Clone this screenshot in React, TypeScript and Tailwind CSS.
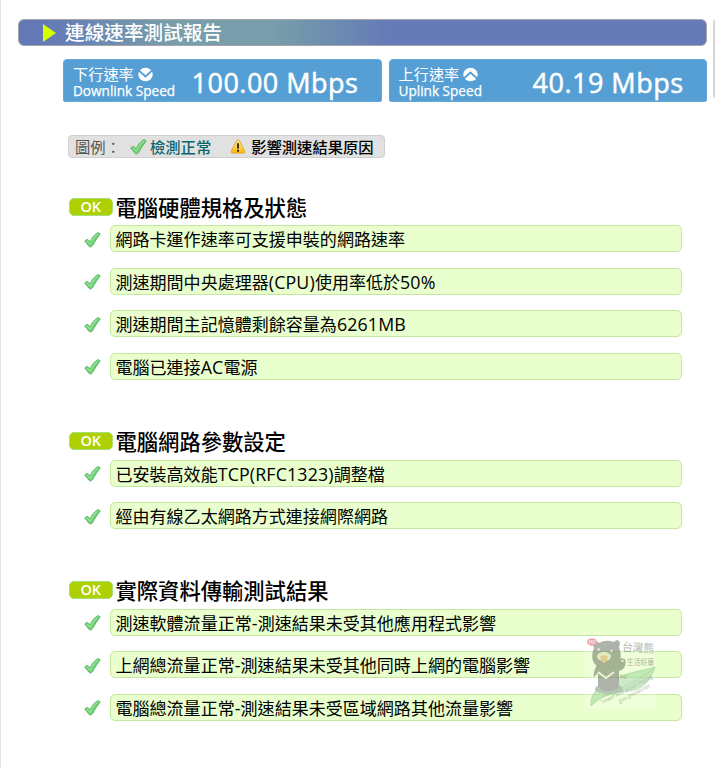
import React from 'react';

const CJK = "font-['Open_Sans','Noto_Sans_CJK_TC',sans-serif]";

function Check({ className }: { className: string }) {
  return (
    <svg viewBox="0 0 17 16" className={className}>
      <path
        d="M0.8 9.2 C1.8 7.4 3.4 7 4.6 8.2 L6 10 C7.8 6 10.4 2.6 13.4 0.9 C14.8 0.4 16.1 1.2 15.9 2.5 C13.2 5.6 11 9.4 8.6 13.6 C7.6 15.3 5.6 15.4 4.6 13.9 C3.5 12.1 2.2 10.6 0.8 9.2 Z"
        fill="#74cf79"
        stroke="#4fb556"
        strokeWidth="0.9"
      />
      <path d="M2.8 8.9 L6.2 12 C8.2 8 10.8 4.4 13.8 2.1" fill="none" stroke="#98e29a" strokeWidth="1.2" />
    </svg>
  );
}

function Arrow({ up = false }: { up?: boolean }) {
  return (
    <svg viewBox="0 0 15 15" className={up ? 'h-[15px] w-[15px] rotate-180' : 'h-[15px] w-[15px]'}>
      <ellipse cx="7.5" cy="7.5" rx="7.2" ry="6.8" fill="#fff" />
      <path d="M0.5 3.2 L7.5 9.4 L14.5 3.2" fill="none" stroke="#559fd5" strokeWidth="1.9" />
    </svg>
  );
}

function SpeedCard({ zh, en, value, up = false, valueClass }: {
  zh: string; en: string; value: string; up?: boolean; valueClass: string;
}) {
  return (
    <div className="flex h-[43px] w-[318.5px] shrink-0 rounded-t-[4px] rounded-b-[2px] border border-[#65a9d8] bg-[#559fd5] pl-[9px] text-white">
      <div className="w-[110px] shrink-0 pt-[5.5px]">
        <div className="flex h-[17px] items-center gap-[4px]">
          <span className="whitespace-nowrap text-[15.2px] leading-[17px]">{zh}</span>
          <Arrow up={up} />
        </div>
        <div className="whitespace-nowrap text-[13.6px] leading-[15px] [-webkit-text-stroke:0.25px_white]">{en}</div>
      </div>
      <div className={`whitespace-nowrap text-[27px] font-medium leading-[45px] tracking-[0.5px] [-webkit-text-stroke:0.5px_white] ${valueClass}`}>
        {value}
      </div>
    </div>
  );
}

/** Latin letters, digits and punctuation are set slightly larger than the Chinese around them. */
function RowText({ text }: { text: string }) {
  return (
    <span>
      {text.split(/([\x20-\x7e]+)/).map((part, i) =>
        i % 2 ? <span key={i} className="text-[17.8px] tracking-[0.15px]">{part}</span> : part,
      )}
    </span>
  );
}

function Section({ title, rows, className }: { title: string; rows: string[]; className: string }) {
  return (
    <section className={className}>
      <div className="flex h-[29.5px] items-start">
        <div className="mt-[2px] flex h-[18px] w-[43.5px] shrink-0 items-center justify-center rounded-[5px] border border-[#a5df79] bg-[#aed000] pt-[1px] text-[14.5px] font-semibold leading-none text-white">
          OK
        </div>
        <h2 className="ml-[3px] whitespace-nowrap text-[21.3px] font-medium leading-[24px]">{title}</h2>
      </div>
      <div className="flex flex-col gap-[15.6px]">
        {rows.map((r) => (
          <div key={r} className="flex h-[27px] items-center">
            <Check className="ml-[15px] mt-[2px] h-[16px] w-[17px] shrink-0" />
            <div className="ml-[9px] flex h-[27px] w-[572px] shrink-0 items-center whitespace-nowrap rounded-[5px] border-[1.5px] border-[#c4e8a0] bg-[#e9ffce] pl-[4.5px] pt-[2px] text-[17.05px] leading-[24px]">
              <RowText text={r} />
            </div>
          </div>
        ))}
      </div>
    </section>
  );
}

function Watermark() {
  return (
    <svg viewBox="0 0 74 74" className="absolute left-[583px] top-[636px] h-[74px] w-[74px] overflow-visible opacity-60">
      <rect x="1" y="2" width="71" height="71" fill="#fff" opacity=".4" />
      <path d="M7 70 C6 58 14 49 27 46 C38 37 54 36 71 31 C67 45 58 54 44 55 C28 57 16 60 7 70 Z" fill="#a9d9a2" stroke="#83c382" strokeWidth=".8" />
      <path d="M8 69 C22 54 48 52 70 32" fill="none" stroke="#87bd83" strokeWidth=".8" />
      <ellipse cx="25" cy="53" rx="14" ry="5" fill="#80a47d" />
      <path d="M13 29 C10 34 9 39 10 41 L14 37 L14 50 C18 57 31 57 35 50 L35 35 C40 34 43 29 41 23 L37 22 L32 29 Z" fill="#77816f" />
      <path d="M10 12 C7 5 13 3 15 7 Q22 3 30 6 C33 2 38 5 35 11 C40 24 34 33 23 33 C11 33 5 24 10 12 Z" fill="#77816f" />
      <ellipse cx="20" cy="20.5" rx="7" ry="4.6" fill="#dce0bd" />
      <path d="M16.5 20 Q20 18.5 23.5 20 C23.5 24 22.5 27 20 27 C17.5 27 16.5 23 16.5 20" fill="#d9ae60" />
      <circle cx="14.5" cy="13.5" r="1.2" fill="#dfe5ce" />
      <circle cx="27.5" cy="15" r="1.2" fill="#dfe5ce" />
      <path d="M14 36 L22 42 L30 36" fill="none" stroke="#eff3dc" strokeWidth="1.8" />
      <circle cx="38.5" cy="25" r="1.3" fill="#d8dfc5" />
      <ellipse cx="8" cy="6" rx="5" ry="3.8" fill="#d66f6f" />
      <text x="4.8" y="8" fontSize="5.5" fill="#fff">Hi!</text>
      <text x="38" y="16" fontSize="12" fill="#858f7a" textLength="32" lengthAdjust="spacingAndGlyphs" transform="rotate(3 54 14)">台灣熊</text>
      <text x="43" y="29" fontSize="8.5" fill="#7d8770" textLength="27" lengthAdjust="spacingAndGlyphs">生活好康</text>
      <text x="36" y="42" fontSize="6" fill="#6c7760">by</text>
      <g transform="translate(18 68) rotate(-27)" fill="#7d8770">
        <text x="0" y="0" fontSize="5.5" textLength="57" lengthAdjust="spacingAndGlyphs">Taiwan Bear goods Sharing</text>
        <text x="16" y="7" fontSize="5.5" textLength="35" lengthAdjust="spacingAndGlyphs">goo.pixnet.net</text>
      </g>
    </svg>
  );
}

export default function App() {
  return (
    <main className={`relative h-[768px] w-[715px] overflow-hidden border-l border-[#e4e4e4] bg-white pt-[19px] text-black ${CJK}`}>
      <div className="flex h-[80px] items-start">
        <div className="ml-[17px] w-[690px] shrink-0">
          <header className="flex h-[27px] w-[689px] items-center rounded-[6px] border border-[#a4a4aa] bg-[linear-gradient(90deg,#637ab7_0%,#637ab7_4%,#779eaa_22%,#779eaa_37%,#647bb7_54%,#647bb7_100%)] text-white">
            <svg viewBox="0 0 13 18" className="ml-[24px] h-[18px] w-[13px]">
              <path d="M0 0 L13 9 L0 18Z" fill="#d6ff00" />
            </svg>
            <h1 className="ml-[9px] whitespace-nowrap text-[19.65px] font-medium leading-[24px]">連線速率測試報告</h1>
          </header>
          <div className="ml-[45px] mt-[13px] flex gap-[7px]">
            <SpeedCard zh="下行速率" en="Downlink Speed" value="100.00 Mbps" valueClass="ml-[8.5px]" />
            <SpeedCard zh="上行速率" en="Uplink Speed" value="40.19 Mbps" up valueClass="ml-[24px]" />
          </div>
        </div>
        <div className="ml-[5px] h-[80px] w-[10px] shrink-0 rounded-l-[4px] border-2 border-[#d4d4d4] bg-[#e8e8e8]" />
      </div>
      <div className="ml-[67px] mt-[36px] flex h-[23px] w-[317px] items-center whitespace-nowrap rounded-[4px] border-[1.5px] border-[#cfcfcf] bg-[#e1e1e1] pl-[6px] text-[15.3px] leading-[20px]">
        <span className="w-[55px] shrink-0 text-[#555]">圖例：</span>
        <Check className="h-[16px] w-[17px] shrink-0" />
        <span className="ml-[3px] font-medium text-[#08676d]">檢測正常</span>
        <svg viewBox="0 0 16 16" className="ml-[19px] h-[15px] w-[16px] shrink-0">
          <defs>
            <linearGradient id="warningFill" x1="0" y1="0" x2="0" y2="1">
              <stop offset="0" stopColor="#fff0a0" />
              <stop offset="1" stopColor="#ffb800" />
            </linearGradient>
          </defs>
          <path d="M6.8 1.5 Q8 0 9.2 1.5 L15.2 13 Q15.8 15 13.8 15 L2.2 15 Q.2 15 .8 13Z" fill="url(#warningFill)" stroke="#e0a22b" />
          <path d="M8 4.5 V10 M8 11.5 V13.5" stroke="#302819" strokeWidth="2" />
        </svg>
        <span className="ml-[5px] font-medium">影響測速結果原因</span>
      </div>
      <Section
        className="ml-[68px] mt-[37.7px] h-[234.5px]"
        title="電腦硬體規格及狀態"
        rows={['網路卡運作速率可支援申裝的網路速率', '測速期間中央處理器(CPU)使用率低於50%', '測速期間主記憶體剩餘容量為6261MB', '電腦已連接AC電源']}
      />
      <Section
        className="ml-[68px] h-[149px]"
        title="電腦網路參數設定"
        rows={['已安裝高效能TCP(RFC1323)調整檔', '經由有線乙太網路方式連接網際網路']}
      />
      <Section
        className="ml-[68px]"
        title="實際資料傳輸測試結果"
        rows={['測速軟體流量正常-測速結果未受其他應用程式影響', '上網總流量正常-測速結果未受其他同時上網的電腦影響', '電腦總流量正常-測速結果未受區域網路其他流量影響']}
      />
      <Watermark />
    </main>
  );
}
